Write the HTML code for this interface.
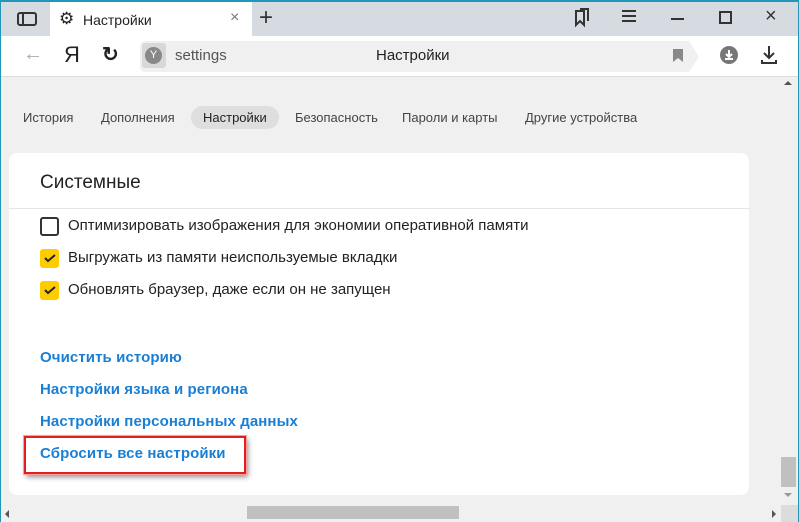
<!DOCTYPE html>
<html><head><meta charset="utf-8"><style>
*{margin:0;padding:0;box-sizing:border-box}
body{width:799px;height:522px;overflow:hidden;background:#f0f0f0;font-family:"Liberation Sans",sans-serif;position:relative;border:1px solid #1e97b8;border-top:2px solid #1e97b8}
.abs{position:absolute}
.title{left:0;top:0;width:797px;height:34px;background:#d6dbe2}
.tab{left:49px;top:0;width:202px;height:34px;background:#fff}
.tool{left:0;top:34px;width:797px;height:41px;background:#fff;border-bottom:1px solid #dcdcdc}
.url{left:139px;top:39px;width:157px;height:31px;background:#f0f0f0;border-radius:5px 0 0 5px}
.url2{left:296px;top:39px;width:390px;height:31px;background:#f0f0f0}
.t{font-size:14px;color:#222}
.nav{font-size:13px;color:#444;top:108px}
.card{left:8px;top:151px;width:740px;height:342px;background:#fff;border-radius:8px}
.cb{width:19px;height:19px;border-radius:3px;left:39px}
.lbl{left:67px;font-size:15px;color:#222}
.lnk{left:39px;font-size:15px;color:#1a7fd4;font-weight:bold;letter-spacing:0.1px}
</style></head><body>
<div class="abs title"></div>
<div class="abs tab"></div>
<svg class="abs" style="left:16px;top:10px" width="20" height="14"><rect x="1" y="1" width="18" height="12" rx="2" fill="none" stroke="#333" stroke-width="2"/><line x1="6" y1="2" x2="6" y2="12" stroke="#333" stroke-width="2"/></svg>
<div class="abs" style="left:58px;top:7px;font-size:17px;color:#222">⚙</div>
<div class="abs t" style="left:82px;top:10px;font-size:14px">Настройки</div>
<div class="abs" style="left:229px;top:7px;font-size:16px;color:#777">×</div>
<div class="abs" style="left:258px;top:2px;font-size:24px;color:#333">+</div>
<svg class="abs" style="left:572px;top:6px" width="18" height="20"><path d="M3 3h8v14l-4-4-4 4z M7 1h8v12" fill="none" stroke="#333" stroke-width="2"/></svg>
<div class="abs" style="left:621px;top:8px;width:14px;height:2px;background:#333;box-shadow:0 5px #333,0 10px #333"></div>
<div class="abs" style="left:670px;top:16px;width:13px;height:2px;background:#333"></div>
<div class="abs" style="left:718px;top:9px;width:13px;height:13px;border:2px solid #333"></div>
<div class="abs" style="left:764px;top:3px;font-size:20px;color:#333">×</div>
<div class="abs tool"></div>
<div class="abs" style="left:22px;top:41px;font-size:20px;color:#aaa">←</div>
<div class="abs" style="left:63px;top:40px;font-size:22px;color:#222">Я</div>
<div class="abs" style="left:101px;top:40px;font-size:20px;color:#222;font-weight:bold">↻</div>
<div class="abs url"></div><div class="abs url2"></div>
<svg class="abs" style="left:686px;top:39px" width="14" height="31"><path d="M0 0h2l10 15.5L2 31H0z" fill="#f0f0f0"/></svg>
<div class="abs" style="left:141px;top:41px;width:24px;height:25px;background:#d8d8d8;border-radius:3px"></div>
<div class="abs" style="left:144px;top:45px;width:17px;height:17px;background:#888;border-radius:50%;color:#fff;font-size:11px;text-align:center;line-height:17px">Y</div>
<div class="abs" style="left:174px;top:45px;font-size:15px;color:#555">settings</div>
<div class="abs" style="left:375px;top:45px;font-size:15px;color:#222">Настройки</div>
<svg class="abs" style="left:672px;top:47px" width="10" height="13"><path d="M0 0h10v13l-5-4-5 4z" fill="#888"/></svg>
<div class="abs" style="left:719px;top:44px;width:18px;height:18px;border-radius:50%;background:#777"></div>
<svg class="abs" style="left:719px;top:44px" width="18" height="18"><path d="M9 4v7M6 8l3 3 3-3M5 13h8" stroke="#fff" stroke-width="2" fill="none"/></svg>
<svg class="abs" style="left:759px;top:43px" width="18" height="20"><path d="M9 1v12M4 8l5 5 5-5M2 15v3h14v-3" stroke="#333" stroke-width="2" fill="none"/></svg>
<div class="abs nav" style="left:22px">История</div>
<div class="abs nav" style="left:100px">Дополнения</div>
<div class="abs" style="left:190px;top:104px;width:88px;height:23px;background:#dedede;border-radius:12px"></div>
<div class="abs nav" style="left:202px;color:#222">Настройки</div>
<div class="abs nav" style="left:294px">Безопасность</div>
<div class="abs nav" style="left:401px">Пароли и карты</div>
<div class="abs nav" style="left:524px">Другие устройства</div>
<div class="abs card"></div>
<div class="abs" style="left:39px;top:170px;font-size:19px;color:#222">Системные</div>
<div class="abs" style="left:8px;top:206px;width:740px;height:1px;background:#e6e6e6"></div>
<div class="abs cb" style="top:215px;border:2px solid #333"></div>
<div class="abs lbl" style="top:215px">Оптимизировать изображения для экономии оперативной памяти</div>
<div class="abs cb" style="top:247px;background:#ffcc00"></div>
<svg class="abs" style="left:43px;top:252px" width="12" height="9"><path d="M1 4l3 3 7-6" stroke="#222" stroke-width="2" fill="none"/></svg>
<div class="abs lbl" style="top:247px">Выгружать из памяти неиспользуемые вкладки</div>
<div class="abs cb" style="top:279px;background:#ffcc00"></div>
<svg class="abs" style="left:43px;top:284px" width="12" height="9"><path d="M1 4l3 3 7-6" stroke="#222" stroke-width="2" fill="none"/></svg>
<div class="abs lbl" style="top:279px">Обновлять браузер, даже если он не запущен</div>
<div class="abs lnk" style="top:347px">Очистить историю</div>
<div class="abs lnk" style="top:379px">Настройки языка и региона</div>
<div class="abs lnk" style="top:411px">Настройки персональных данных</div>
<div class="abs" style="left:23px;top:434px;width:222px;height:38px;border:2px solid #e02020;outline:1px solid #f7a0a0;box-shadow:2px 3px 5px rgba(0,0,0,.45);background:#fff"></div>
<div class="abs lnk" style="top:443px">Сбросить все настройки</div>
<div class="abs" style="left:779px;top:75px;width:18px;height:428px;background:#f0f0f0"></div>
<div class="abs" style="left:783px;top:79px;width:0;height:0;border:4px solid transparent;border-bottom:4px solid #555;border-top:0"></div>
<div class="abs" style="left:780px;top:455px;width:15px;height:30px;background:#c0c0c0"></div>
<div class="abs" style="left:783px;top:491px;border:4px solid transparent;border-top:4px solid #999;border-bottom:0"></div>
<div class="abs" style="left:0;top:503px;width:780px;height:17px;background:#f0f0f0"></div>
<div class="abs" style="left:4px;top:508px;border:4px solid transparent;border-right:4px solid #555;border-left:0"></div>
<div class="abs" style="left:246px;top:504px;width:212px;height:13px;background:#c0c0c0"></div>
<div class="abs" style="left:771px;top:508px;border:4px solid transparent;border-left:4px solid #555;border-right:0"></div>
<div class="abs" style="left:780px;top:503px;width:17px;height:17px;background:#dcdcdc"></div>
</body></html>
